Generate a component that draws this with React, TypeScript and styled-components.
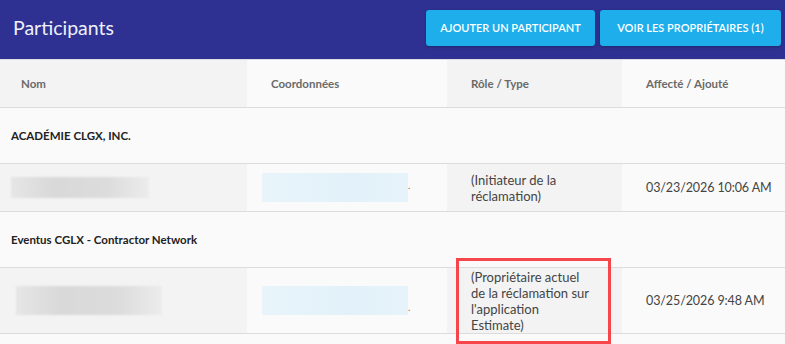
import React from "react"
import styled, { createGlobalStyle } from "styled-components"

const GlobalStyle = createGlobalStyle`
  body {
    margin: 0;
    background: #fafafa;
    font-family: "Lato", "Liberation Sans", sans-serif;
  }
`

const Page = styled.div`
  width: 785px;
  height: 344px;
  overflow: hidden;
  background: #fafafa;
`

const Header = styled.header`
  height: 60px;
  box-sizing: border-box;
  display: flex;
  align-items: center;
  justify-content: space-between;
  padding: 0 4px 4px 13px;
  background: #2e3191;
  border-bottom: 1px solid #dedede;
`

const Title = styled.h1`
  margin: 0;
  font-size: 19.5px;
  font-weight: 400;
  color: #eef0fb;
`

const Actions = styled.div`
  display: flex;
  gap: 5px;
`

const Button = styled.button<{ width: number }>`
  width: ${(p) => p.width}px;
  height: 36px;
  border: none;
  border-radius: 3px;
  background: #1daeeb;
  color: #fff;
  font-family: inherit;
  font-size: 11px;
  font-weight: 600;
  text-transform: uppercase;
  box-shadow: 0 1px 3px rgba(0, 0, 0, 0.25);
  cursor: pointer;
`

const Row = styled.div<{ minHeight: number }>`
  display: grid;
  grid-template-columns: 247px 200px 175px 1fr;
  min-height: ${(p) => p.minHeight}px;
  border-bottom: 1px solid #dcdcdc;
`

const Cell = styled.div<{ shaded?: boolean; pad?: number }>`
  display: flex;
  align-items: center;
  position: relative;
  padding-left: ${(p) => p.pad ?? 24}px;
  background: ${(p) => (p.shaded ? "#f3f3f3" : "#fafafa")};
  font-size: 13px;
  line-height: 16px;
  color: #444;
`

const HeadLabel = styled.span`
  font-size: 11.5px;
  font-weight: 700;
  color: #6a6a6a;
`

const GroupRow = styled.div`
  height: 55px;
  display: flex;
  align-items: center;
  padding-left: 11px;
  border-bottom: 1px solid #dcdcdc;
  font-size: 11.5px;
  font-weight: 700;
  color: #222;
`

const NameBlur = styled.div<{ width: number; height: number }>`
  width: ${(p) => p.width}px;
  height: ${(p) => p.height}px;
  background: linear-gradient(
    90deg,
    #e6e6e6 0%,
    #d9d9d9 30%,
    #dcdcdc 70%,
    #ececec 100%
  );
  filter: blur(1px);
`

const ContactBlur = styled.div`
  width: 146px;
  height: 29px;
  background: linear-gradient(90deg, #e8f4fa, #e2f1f9 60%, #e6f3fa);
`

const Dot = styled.span`
  align-self: flex-end;
  margin-bottom: 17px;
  font-size: 9px;
  color: #666;
`

const RoleText = styled.div`
  width: 122px;
`

const DateText = styled.span`
  font-size: 12.5px;
  letter-spacing: -0.1px;
`

const Highlight = styled.div`
  position: absolute;
  left: 9px;
  right: 11px;
  top: -10px;
  height: 86px;
  border: 3px solid #f5464b;
  box-sizing: border-box;
  pointer-events: none;
`

type Entry = {
  company: string
  nameWidth: number
  nameHeight: number
  namePad: number
  role: string
  date: string
  minHeight: number
  highlight?: boolean
}

const entries: Entry[] = [
  {
    company: "ACADÉMIE CLGX, INC.",
    nameWidth: 138,
    nameHeight: 21,
    namePad: 11,
    role: "(Initiateur de la réclamation)",
    date: "03/23/2026 10:06 AM",
    minHeight: 47,
  },
  {
    company: "Eventus CGLX - Contractor Network",
    nameWidth: 146,
    nameHeight: 29,
    namePad: 16,
    role: "(Propriétaire actuel de la réclamation sur l'application Estimate)",
    date: "03/25/2026 9:48 AM",
    minHeight: 65,
    highlight: true,
  },
]

export default function App() {
  return (
    <Page>
      <GlobalStyle />
      <Header>
        <Title>Participants</Title>
        <Actions>
          <Button width={169}>Ajouter un participant</Button>
          <Button width={181}>Voir les propriétaires (1)</Button>
        </Actions>
      </Header>

      <Row minHeight={47}>
        <Cell shaded pad={21}>
          <HeadLabel>Nom</HeadLabel>
        </Cell>
        <Cell>
          <HeadLabel>Coordonnées</HeadLabel>
        </Cell>
        <Cell shaded>
          <HeadLabel>Rôle / Type</HeadLabel>
        </Cell>
        <Cell>
          <HeadLabel>Affecté / Ajouté</HeadLabel>
        </Cell>
      </Row>

      {entries.map((e) => (
        <React.Fragment key={e.company}>
          <GroupRow>{e.company}</GroupRow>
          <Row minHeight={e.minHeight}>
            <Cell shaded pad={e.namePad}>
              <NameBlur width={e.nameWidth} height={e.nameHeight} />
            </Cell>
            <Cell pad={15}>
              <ContactBlur />
              <Dot>.</Dot>
            </Cell>
            <Cell shaded>
              <RoleText>{e.role}</RoleText>
              {e.highlight && <Highlight />}
            </Cell>
            <Cell>
              <DateText>{e.date}</DateText>
            </Cell>
          </Row>
        </React.Fragment>
      ))}
    </Page>
  )
}
